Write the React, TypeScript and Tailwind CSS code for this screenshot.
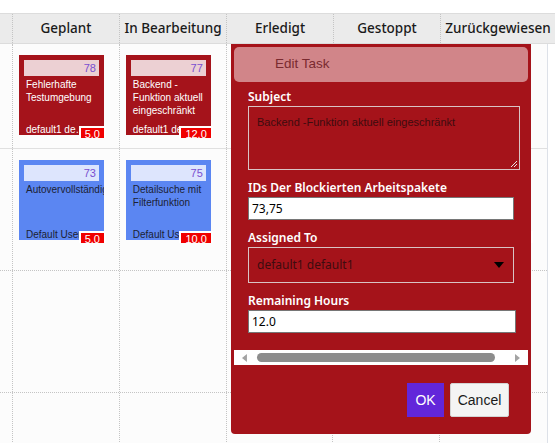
import React from 'react';

interface Card {
  id: number;
  title: string;
  user: string;
  hours: string;
  color: 'red' | 'blue';
}

const columns = ['Geplant', 'In Bearbeitung', 'Erledigt', 'Gestoppt', 'Zurückgewiesen'];

// row -> column -> card
const rows: (Card | null)[][] = [
  [
    { id: 78, title: 'Fehlerhafte Testumgebung', user: 'default1 default1', hours: '5.0', color: 'red' },
    { id: 77, title: 'Backend -Funktion aktuell eingeschränkt', user: 'default1 default1', hours: '12.0', color: 'red' },
    null,
    null,
    null,
  ],
  [
    { id: 73, title: 'Autovervollständigung', user: 'Default User', hours: '5.0', color: 'blue' },
    { id: 75, title: 'Detailsuche mit Filterfunktion', user: 'Default User', hours: '10.0', color: 'blue' },
    null,
    null,
    { id: 74, title: 'Export', user: 'Default User', hours: '3.0', color: 'blue' },
  ],
  [null, null, null, null, null],
  [null, null, null, null, null],
];

const rowHeights = ['h-[105px]', 'h-[122px]', 'h-[122px]', 'h-[60px]'];

const arial = { fontFamily: '"Liberation Sans", Arial, sans-serif' };

function TaskCard({ card }: { card: Card }) {
  const red = card.color === 'red';
  return (
    <div className="relative w-[85px] h-[80px]" style={arial}>
      <div
        className={`w-full h-full overflow-hidden px-[5px] pt-[5px] flex flex-col ${
          red ? 'bg-[#a5131b] text-white' : 'bg-[#5b86f2] text-[#1c2233]'
        }`}
      >
        <div
          className={`h-[16px] shrink-0 text-right pr-[3px] text-[11px] leading-[16px] text-[#7a4fd0] ${
            red ? 'bg-[#ecd0d3]' : 'bg-[#dde5fd]'
          }`}
        >
          {card.id}
        </div>
        <div className="pl-[2px] pt-[2px] text-[10px] leading-[13px] flex-1">{card.title}</div>
        <div className="relative top-[2px] pl-[2px] w-[62px] truncate text-[10px] leading-[14px]">{card.user}</div>
      </div>
      <div className="absolute right-[-2px] bottom-[-3px] h-[12px] overflow-hidden border-2 border-b-0 border-white bg-[#f00000] px-[4px] text-white text-[11px] leading-[12px]">
        {card.hours}
      </div>
    </div>
  );
}

function Field({ label, children }: { label: string; children: React.ReactNode }) {
  return (
    <div className="flex flex-col">
      <div className="text-[12px] font-semibold text-white leading-[16px] mb-[1px]">{label}</div>
      {children}
    </div>
  );
}

function EditTaskDialog() {
  return (
    <div className="absolute left-[231px] top-[44px] w-[300px] h-[390px] bg-[#a5131a] rounded-b-[4px] px-[3px] pt-[3px]">
      <div
        className="h-[35px] rounded-[5px] bg-[#d18589] pl-[41px] flex items-center text-[13.5px] text-[#7a2a30]"
        style={arial}
      >
        Edit Task
      </div>
      <div className="pl-[14px] pt-[7px] flex flex-col gap-[10px]">
        <Field label="Subject">
          <div
            className="relative w-[272px] h-[64px] border border-[#d9c3c4] pl-[8px] pt-[7px] text-[11px] text-[#3d0c0f]"
            style={arial}
          >
            Backend -Funktion aktuell eingeschränkt
            <svg className="absolute right-[2px] bottom-[2px]" width="7" height="7" viewBox="0 0 7 7">
              <path d="M7 1L1 7M7 4L4 7" stroke="#e6e6e6" strokeWidth="1" />
            </svg>
          </div>
        </Field>
        <Field label="IDs Der Blockierten Arbeitspakete">
          <div className="w-[266px] h-[23px] bg-white border border-[#767676] pl-[3px] flex items-center text-[12px] text-black">
            73,75
          </div>
        </Field>
        <Field label="Assigned To">
          <div className="w-[266px] h-[36px] border border-[#d9c3c4] pl-[8px] pr-[9px] flex items-center justify-between text-[12px] text-[#3d0c0f]">
            <span>default1 default1</span>
            <svg width="10" height="6" viewBox="0 0 10 6">
              <path d="M0 0H10L5 6Z" fill="#000" />
            </svg>
          </div>
        </Field>
        <Field label="Remaining Hours">
          <div className="w-[268px] h-[23px] bg-white border border-[#767676] pl-[3px] flex items-center text-[12px] text-black">
            12.0
          </div>
        </Field>
      </div>
      {/* horizontal scrollbar */}
      <div className="mt-[17px] h-[15px] bg-white flex items-center px-[8px] gap-[10px]">
        <svg width="5" height="8" viewBox="0 0 5 8">
          <path d="M5 0V8L0 4Z" fill="#a3a3a3" />
        </svg>
        <div className="w-[243px] h-[9px] rounded-full bg-[#8c8c8c]" />
        <div className="flex-1" />
        <svg width="5" height="8" viewBox="0 0 5 8">
          <path d="M0 0V8L5 4Z" fill="#a3a3a3" />
        </svg>
      </div>
      <div className="mt-[18px] flex justify-end gap-[6px] pr-[19px]" style={arial}>
        <button className="w-[37px] h-[34px] bg-[#6226da] text-white text-[14px]">OK</button>
        <button className="w-[59px] h-[34px] bg-[#f4f4f4] border border-[#d4d4d4] rounded-[2px] text-[#1a1a1a] text-[14px]">
          Cancel
        </button>
      </div>
    </div>
  );
}

export default function App() {
  return (
    <div
      className="relative w-[557px] h-[443px] overflow-hidden bg-white"
      style={{ fontFamily: '"Noto Sans", "Open Sans", sans-serif' }}
    >
      <div className="h-[13px]" />
      {/* header */}
      <div className="flex w-[555px] h-[31px] bg-[#ebebeb] border-t border-b border-[#dcdcdc]">
        <div className="w-[13px] border-r border-dotted border-[#c4c4c4]" />
        {columns.map((c, i) => (
          <div
            key={c}
            className={`flex items-center justify-center text-[13.5px] font-medium text-[#1a1a1a] ${
              i === columns.length - 1 ? 'flex-1' : 'w-[107px] border-r border-dotted border-[#c4c4c4]'
            }`}
          >
            {c}
          </div>
        ))}
      </div>
      {/* body */}
      <div className="w-[548px] bg-[#fcfcfc] border-r border-[#dde1e8]">
        {rows.map((row, r) => (
          <div
            key={r}
            className={`flex ${rowHeights[r]} ${
              r === 0 ? 'border-b border-solid border-[#e0e0e0]' : 'border-b border-dotted border-[#c4c4c4]'
            }`}
          >
            <div className="w-[13px] border-r border-dotted border-[#c4c4c4]" />
            {row.map((card, i) => (
              <div
                key={i}
                className={`w-[107px] pl-[6px] pt-[11px] ${
                  i < row.length - 1 ? 'border-r border-dotted border-[#c4c4c4]' : ''
                }`}
              >
                {card && <TaskCard card={card} />}
              </div>
            ))}
          </div>
        ))}
      </div>
      <EditTaskDialog />
    </div>
  );
}
